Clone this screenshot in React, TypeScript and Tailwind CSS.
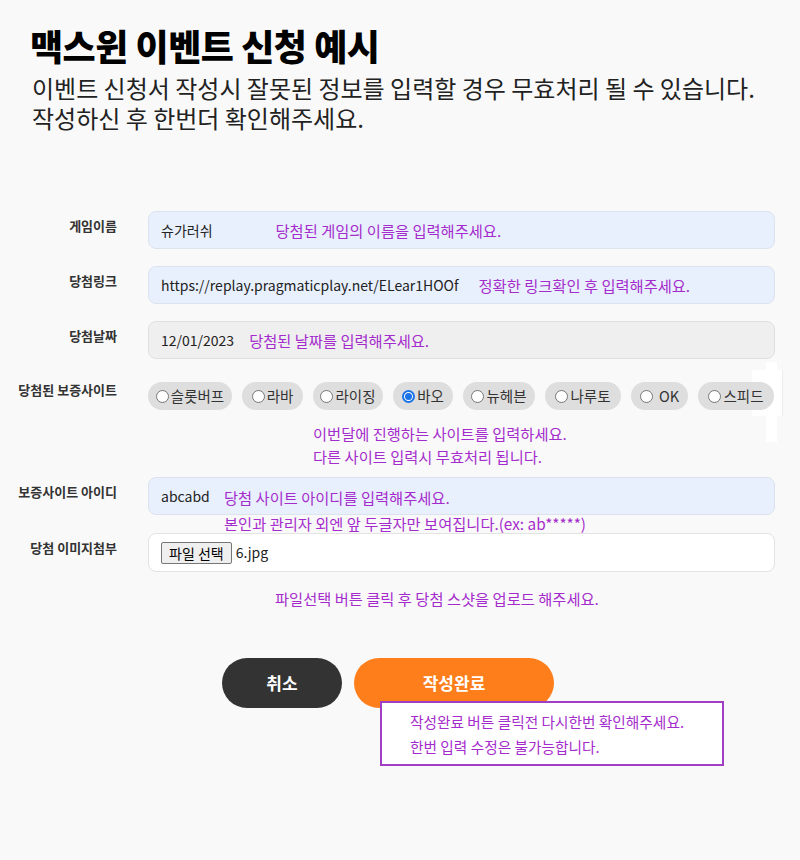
const font = "font-['Noto_Sans_CJK_KR','Noto_Sans',sans-serif]";

const sites = [
  { name: "슬롯버프", w: "w-[84px]" },
  { name: "라바", w: "w-[61px]" },
  { name: "라이징", w: "w-[70px]" },
  { name: "바오", w: "w-[60px]" },
  { name: "뉴헤븐", w: "w-[72px]" },
  { name: "나루토", w: "w-[76px]" },
  { name: "OK", w: "w-[57px]" },
  { name: "스피드", w: "w-[76px]" },
];

function Radio({ checked }: { checked?: boolean }) {
  return checked ? (
    <span className="inline-flex h-[13px] w-[13px] shrink-0 items-center justify-center rounded-full border-2 border-[#1a73e8] bg-white">
      <span className="h-[7px] w-[7px] rounded-full bg-[#1a73e8]" />
    </span>
  ) : (
    <span className="inline-block h-[13px] w-[13px] shrink-0 rounded-full border border-[#767676] bg-white" />
  );
}

function Label({ children }: { children: React.ReactNode }) {
  return (
    <div className="w-[117px] shrink-0 pt-[5px] text-right text-[13px] font-bold leading-[20px] text-[#333]">
      {children}
    </div>
  );
}

export default function App() {
  return (
    <div className={`${font} relative min-h-[860px] bg-[#f9f9f9] text-[#222]`}>
      {/* 오른쪽 흰색 조각 (뒤쪽) */}
      <div className="absolute left-[752px] top-[370px] h-[46px] w-[31px] border-r border-[#ececec] bg-white" />
      <div className="absolute left-[766px] top-[362px] h-[80px] w-[11px] bg-white" />

      {/* 제목 */}
      <header className="relative px-[30px] pt-[24px]">
        <h1 className="text-[36px] font-black leading-[42px] tracking-[-0.5px] text-black">맥스윈 이벤트 신청 예시</h1>
        <p className="mt-[7px] pl-[2px] text-[24px] leading-[30px] text-[#222]">
          이벤트 신청서 작성시 잘못된 정보를 입력할 경우 무효처리 될 수 있습니다.
          <br />
          작성하신 후 한번더 확인해주세요.
        </p>
      </header>

      <main className="relative mt-[78px] flex flex-col">
        {/* 게임이름 */}
        <div className="flex">
          <Label>게임이름</Label>
          <div className="ml-[31px] flex h-[38px] w-[627px] items-center rounded-[8px] border border-[#dde3ee] bg-[#e8f0fe] pl-[12px] text-[14px]">
            <span>슈가러쉬</span>
            <span className="ml-[63px] text-[15.3px] text-[#a52ccc]">당첨된 게임의 이름을 입력해주세요.</span>
          </div>
        </div>

        {/* 당첨링크 */}
        <div className="mt-[17px] flex">
          <Label>당첨링크</Label>
          <div className="ml-[31px] flex h-[38px] w-[627px] items-center rounded-[8px] border border-[#dde3ee] bg-[#e8f0fe] pl-[12px] text-[14px]">
            <span>https://replay.pragmaticplay.net/ELear1HOOf</span>
            <span className="ml-[20px] text-[15.3px] text-[#a52ccc]">정확한 링크확인 후 입력해주세요.</span>
          </div>
        </div>

        {/* 당첨날짜 */}
        <div className="mt-[17px] flex">
          <Label>당첨날짜</Label>
          <div className="ml-[31px] flex h-[38px] w-[627px] items-center rounded-[8px] border border-[#e0e0e0] bg-[#efefef] pl-[12px] text-[14px]">
            <span>12/01/2023</span>
            <span className="ml-[15px] text-[15.3px] text-[#a52ccc]">당첨된 날짜를 입력해주세요.</span>
          </div>
        </div>

        {/* 보증사이트 */}
        <div className="mt-[23px] flex">
          <div className="-mt-[2px] w-[117px] shrink-0 text-right text-[13px] font-bold leading-[20px] text-[#333]">
            당첨된 보증사이트
          </div>
          <div className="ml-[31px] w-[640px]">
            <div className="flex gap-[10px]">
              {sites.map((s, i) => (
                <span
                  key={s.name}
                  className={`inline-flex h-[28px] ${s.w} items-center justify-center gap-[2px] rounded-full bg-[#dedede] text-[14.5px] text-[#333]`}
                >
                  <Radio checked={i === 3} />
                  <span className={s.name === "OK" ? "ml-[4px]" : ""}>{s.name}</span>
                </span>
              ))}
            </div>
            <p className="mt-[12px] pl-[165px] text-[15.3px] leading-[23px] text-[#a52ccc]">
              이번달에 진행하는 사이트를 입력하세요.
              <br />
              다른 사이트 입력시 무효처리 됩니다.
            </p>
          </div>
        </div>

        {/* 보증사이트 아이디 */}
        <div className="mt-[9px] flex">
          <Label>보증사이트 아이디</Label>
          <div className="relative ml-[31px] flex h-[38px] w-[627px] items-center rounded-[8px] border border-[#dde3ee] bg-[#e8f0fe] pl-[12px] text-[14px]">
            <span>abcabd</span>
            <span className="absolute left-[75px] top-[6px] text-[15.3px] leading-[26px] text-[#a52ccc]">
              당첨 사이트 아이디를 입력해주세요.
              <br />
              본인과 관리자 외엔 앞 두글자만 보여집니다.(ex: ab*****)
            </span>
          </div>
        </div>

        {/* 이미지첨부 */}
        <div className="mt-[18px] flex">
          <Label>당첨 이미지첨부</Label>
          <div className="ml-[31px] flex h-[39px] w-[627px] items-center rounded-[8px] border border-[#e3e3e3] bg-white pl-[12px] text-[14px]">
            <span className="rounded-[2px] border border-[#767676] bg-[#efefef] px-[7px] text-[14px] leading-[20px] text-black">
              파일 선택
            </span>
            <span className="ml-[4px]">6.jpg</span>
          </div>
        </div>

        <p className="mt-[14px] pl-[275px] text-[15.3px] leading-[24px] text-[#a52ccc]">
          파일선택 버튼 클릭 후 당첨 스샷을 업로드 해주세요.
        </p>

        {/* 버튼 */}
        <div className="relative mt-[48px] flex gap-[12px] pl-[222px]">
          <button className="h-[50px] w-[120px] rounded-full bg-[#333] text-[17px] font-bold text-white">취소</button>
          <button className="h-[50px] w-[200px] rounded-full bg-[#fd7e1a] text-[17px] font-bold text-white">작성완료</button>
          <div className="absolute left-[380px] top-[43px] h-[65px] w-[344px] border-2 border-[#a03ec4] bg-white pl-[28px] pt-[6px] text-[14.7px] leading-[25px] text-[#a52ccc]">
            작성완료 버튼 클릭전 다시한번 확인해주세요.
            <br />
            한번 입력 수정은 불가능합니다.
          </div>
        </div>
      </main>
    </div>
  );
}
